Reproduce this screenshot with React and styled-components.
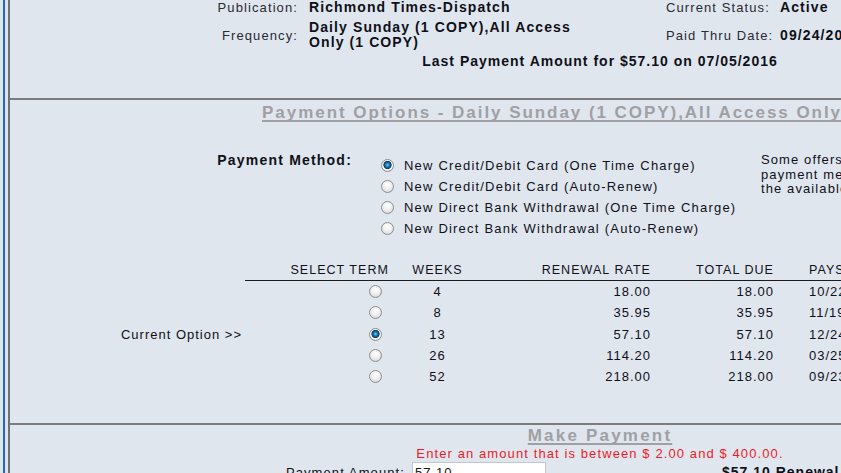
import React from "react";
import styled, { createGlobalStyle } from "styled-components";

const Global = createGlobalStyle`
  html, body { margin: 0; padding: 0; }
  body {
    background: #dfe6ee;
    overflow: hidden;
    font-family: "Liberation Sans", Arial, sans-serif;
    color: #101018;
  }
`;

const Frame = styled.div`
  display: flex;
  width: 1200px;
  min-height: 473px;
  padding-left: 3px;
`;

const BlueRule = styled.div`
  width: 2px;
  background: #2366dc;
  margin-right: 3px;
  flex: none;
`;

const Panel = styled.div`
  width: 1180px;
  border-left: 2px solid #707070;
  display: flex;
  flex-direction: column;
`;

const Section = styled.section`
  box-sizing: border-box;
  height: ${(p) => p.$h || "auto"};
  border-bottom: ${(p) => (p.$last ? "none" : "2px solid #7c7c7c")};
  padding-top: ${(p) => p.$pt || "0px"};
`;

const InfoGrid = styled.div`
  display: grid;
  grid-template-columns: 288px 276px 92px 114px 1fr;
  row-gap: 5px;
  align-items: center;
`;

const InfoLabel = styled.div`
  font-size: 13px;
  letter-spacing: 1.1px;
  line-height: 15px;
  color: #2a2a32;
  text-align: ${(p) => (p.$left ? "left" : "right")};
  white-space: nowrap;
`;

const InfoValue = styled.div`
  font-size: 14px;
  font-weight: bold;
  letter-spacing: 1.1px;
  line-height: 15px;
  padding-left: ${(p) => p.$pl || "11px"};
  white-space: ${(p) => (p.$wrap ? "normal" : "nowrap")};
`;

const Spacer = styled.div``;

const LastPayment = styled.div`
  grid-column: 1 / -1;
  text-align: center;
  font-size: 14px;
  font-weight: bold;
  letter-spacing: 1px;
  line-height: 15px;
  margin-top: -1px;
`;

const Heading = styled.h2`
  margin: 0;
  text-align: center;
  font-size: 17px;
  line-height: 20px;
  font-weight: bold;
  letter-spacing: ${(p) => p.$ls || "1.5px"};
  color: #a0a0a4;
  text-decoration: underline;
  text-decoration-thickness: 1.5px;
  text-decoration-skip-ink: none;
  text-underline-offset: 2px;
  white-space: nowrap;
  margin-top: ${(p) => p.$mt || "0px"};
`;

const MethodRow = styled.div`
  display: grid;
  grid-template-columns: 342px 409px 1fr;
  margin-top: 30px;
  align-items: start;
`;

const MethodLabel = styled.div`
  text-align: right;
  font-size: 14px;
  font-weight: bold;
  letter-spacing: 1.2px;
  line-height: 15px;
`;

const Options = styled.div`
  display: flex;
  flex-direction: column;
  padding-left: 29px;
  padding-top: 2px;
`;

const Option = styled.label`
  display: flex;
  align-items: center;
  height: 21px;
  font-size: 13px;
  letter-spacing: 1.2px;
  white-space: nowrap;
`;

const Radio = styled.input.attrs({ type: "radio" })`
  appearance: none;
  -webkit-appearance: none;
  box-sizing: border-box;
  width: 13px;
  height: 13px;
  margin: 0 10px 0 0;
  border-radius: 50%;
  border: 1px solid #8d8d8d;
  background: radial-gradient(circle at 50% 35%, #ffffff 0, #f4f4f4 35%, #d2d2d2 100%);
  flex: none;
  &:checked {
    background: radial-gradient(
      circle at 50% 45%,
      #7fd0f5 0,
      #1c86c4 1.6px,
      #0c4a78 3.3px,
      #0c3a5e 3.8px,
      #f2f2f2 4.4px,
      #ffffff 5px,
      #d4d4d4 6.5px
    );
  }
`;

const Note = styled.div`
  font-size: 13px;
  letter-spacing: 1.1px;
  line-height: 14.5px;
  white-space: nowrap;
`;

const Table = styled.div`
  display: grid;
  grid-template-columns: 235px 155px 75px 185px 123px 200px;
  margin-top: 23px;
`;

const HeadCell = styled.div`
  font-size: 12.5px;
  letter-spacing: 1.05px;
  line-height: 16px;
  padding-bottom: 2px;
  border-bottom: ${(p) => (p.$blank ? "1px solid transparent" : "1.5px solid #1c1c1c")};
  text-align: ${(p) => p.$align || "right"};
  padding-right: ${(p) => p.$pr || "0px"};
  padding-left: ${(p) => p.$pl || "0px"};
  white-space: nowrap;
`;

const Cell = styled.div`
  height: 21.3px;
  display: flex;
  align-items: center;
  justify-content: ${(p) =>
    p.$align === "center" ? "center" : p.$align === "left" ? "flex-start" : "flex-end"};
  padding-right: ${(p) => p.$pr || "0px"};
  padding-left: ${(p) => p.$pl || "0px"};
  font-size: 13px;
  letter-spacing: 1px;
  white-space: nowrap;
`;

const TermRadio = styled(Radio)`
  margin: 0;
`;

const Warning = styled.div`
  text-align: center;
  color: #ee1c2a;
  font-size: 13px;
  letter-spacing: 1.1px;
  line-height: 15px;
`;

const AmountRow = styled.div`
  display: grid;
  grid-template-columns: 395px 7px 134px 176px 1fr;
  align-items: center;
  margin-top: 1px;
`;

const AmountLabel = styled.div`
  text-align: right;
  font-size: 13px;
  letter-spacing: 1.1px;
`;

const AmountInput = styled.input`
  box-sizing: border-box;
  width: 134px;
  height: 20px;
  border: 1px solid #c3c7cc;
  background: #fff;
  padding: 0 2px;
  font-family: "Liberation Sans", Arial, sans-serif;
  font-size: 13px;
  letter-spacing: 1px;
  color: #111;
`;

const RenewalText = styled.div`
  font-size: 14px;
  font-weight: bold;
  letter-spacing: 1px;
  white-space: nowrap;
`;

const terms = [
  { weeks: "4", rate: "18.00", due: "18.00", pays: "10/22/2016" },
  { weeks: "8", rate: "35.95", due: "35.95", pays: "11/19/2016" },
  { weeks: "13", rate: "57.10", due: "57.10", pays: "12/24/2016", current: true },
  { weeks: "26", rate: "114.20", due: "114.20", pays: "03/25/2017" },
  { weeks: "52", rate: "218.00", due: "218.00", pays: "09/23/2017" },
];

const methods = [
  "New Credit/Debit Card (One Time Charge)",
  "New Credit/Debit Card (Auto-Renew)",
  "New Direct Bank Withdrawal (One Time Charge)",
  "New Direct Bank Withdrawal (Auto-Renew)",
];

export default function App() {
  return (
    <>
      <Global />
      <Frame>
        <BlueRule />
        <Panel>
          <Section $h="100px">
            <InfoGrid>
              <InfoLabel>Publication:</InfoLabel>
              <InfoValue>Richmond Times-Dispatch</InfoValue>
              <Spacer />
              <InfoLabel $left>Current Status:</InfoLabel>
              <InfoValue $pl="0px">Active</InfoValue>

              <InfoLabel>Frequency:</InfoLabel>
              <InfoValue $wrap>Daily Sunday (1 COPY),All Access Only (1 COPY)</InfoValue>
              <Spacer />
              <InfoLabel $left>Paid Thru Date:</InfoLabel>
              <InfoValue $pl="0px">09/24/2016</InfoValue>

              <LastPayment>Last Payment Amount for $57.10 on 07/05/2016</LastPayment>
            </InfoGrid>
          </Section>

          <Section $h="325px" $pt="2px">
            <Heading $ls="1.95px" $mt="1px">
              Payment Options - Daily Sunday (1 COPY),All Access Only (1 COPY)
            </Heading>
            <MethodRow>
              <MethodLabel>Payment Method:</MethodLabel>
              <Options>
                {methods.map((m, i) => (
                  <Option key={m}>
                    <Radio name="method" defaultChecked={i === 0} />
                    {m}
                  </Option>
                ))}
              </Options>
              <Note>
                Some offers may vary by
                <br />
                payment method. Review
                <br />
                the available terms below.
              </Note>
            </MethodRow>

            <Table>
              <HeadCell $blank />
              <HeadCell $pr="11px">SELECT TERM</HeadCell>
              <HeadCell $align="center">WEEKS</HeadCell>
              <HeadCell $pr="9px">RENEWAL RATE</HeadCell>
              <HeadCell $pr="9px">TOTAL DUE</HeadCell>
              <HeadCell $align="left" $pl="26px">PAYS THRU</HeadCell>
              {terms.map((t) => (
                <React.Fragment key={t.weeks}>
                  <Cell $pr="3px">{t.current ? "Current Option >>" : ""}</Cell>
                  <Cell $pr="18px">
                    <TermRadio name="term" defaultChecked={!!t.current} />
                  </Cell>
                  <Cell $align="center">{t.weeks}</Cell>
                  <Cell $pr="9px">{t.rate}</Cell>
                  <Cell $pr="9px">{t.due}</Cell>
                  <Cell $align="left" $pl="26px">{t.pays}</Cell>
                </React.Fragment>
              ))}
            </Table>
          </Section>

          <Section $last $pt="1px">
            <Heading $ls="2.2px">Make Payment</Heading>
            <Warning>Enter an amount that is between $ 2.00 and $ 400.00.</Warning>
            <AmountRow>
              <AmountLabel>Payment Amount:</AmountLabel>
              <span />
              <AmountInput defaultValue="57.10" />
              <span />
              <RenewalText>$57.10 Renewal Payment</RenewalText>
            </AmountRow>
          </Section>
        </Panel>
      </Frame>
    </>
  );
}
